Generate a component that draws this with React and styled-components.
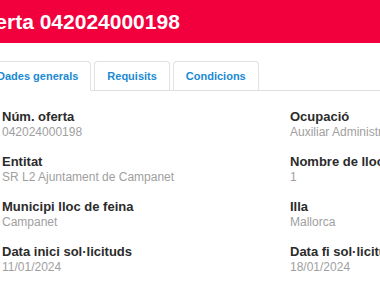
import React, { useState } from 'react';
import styled, { createGlobalStyle } from 'styled-components';

const GlobalStyle = createGlobalStyle`
  html, body {
    margin: 0;
    padding: 0;
    background: #fff;
    overflow: hidden;
  }
  body {
    font-family: "Liberation Sans", Arial, Helvetica, sans-serif;
    color: #333;
  }
`;

// the page is seen scrolled a little to the right
const Page = styled.div`
  margin-left: -22px;
  width: 640px;
`;

const Header = styled.div`
  height: 43px;
  background: #f2003d;
  display: flex;
  align-items: center;
`;

const Title = styled.h1`
  margin: 0 0 0 -6px;
  font-size: 21px;
  font-weight: bold;
  color: #fff;
  line-height: 24px;
`;

const TabList = styled.ul`
  list-style: none;
  display: flex;
  margin: 18px 0 0;
  padding: 0 0 0 6px;
  border-bottom: 1px solid #dedede;
`;

const Tab = styled.li`
  margin: 0 3px -1px 0;
  padding: 0 12px;
  display: flex;
  align-items: center;
  box-sizing: border-box;
  height: 30px;
  border: 1px solid #e2e2e2;
  border-bottom-color: ${props => (props.active ? '#fff' : '#dedede')};
  border-radius: 4px 4px 0 0;
  background: #fff;
  font-size: 11px;
  font-weight: bold;
  color: #1b8ad3;
  cursor: pointer;
`;

const Fields = styled.div`
  display: grid;
  grid-template-columns: 288px 288px;
  row-gap: 14px;
  padding: 18px 0 0 24px;
`;

const Field = styled.div`
  display: flex;
  flex-direction: column;
`;

const Label = styled.div`
  font-size: 13px;
  font-weight: bold;
  line-height: 15px;
  color: #2b2b2b;
  white-space: nowrap;
`;

const Value = styled.div`
  margin-top: 1px;
  font-size: 12px;
  line-height: 15px;
  color: #a0a0a0;
  white-space: nowrap;
`;

const tabs = ['Dades generals', 'Requisits', 'Condicions'];

const fields = [
  ['Núm. oferta', '042024000198'],
  ['Ocupació', 'Auxiliar Administratiu'],
  ['Entitat', 'SR L2 Ajuntament de Campanet'],
  ['Nombre de llocs', '1'],
  ['Municipi lloc de feina', 'Campanet'],
  ['Illa', 'Mallorca'],
  ['Data inici sol·licituds', '11/01/2024'],
  ['Data fi sol·licituds', '18/01/2024'],
];

const App = () => {
  const [selected, setSelected] = useState(0);

  return (
    <Page>
      <GlobalStyle />
      <Header>
        <Title>Oferta 042024000198</Title>
      </Header>
      <TabList>
        {tabs.map((t, i) => (
          <Tab key={t} active={selected === i} onClick={() => setSelected(i)}>
            {t}
          </Tab>
        ))}
      </TabList>
      <Fields>
        {fields.map(([label, value]) => (
          <Field key={label}>
            <Label>{label}</Label>
            <Value>{value}</Value>
          </Field>
        ))}
      </Fields>
    </Page>
  );
};

export default App;
